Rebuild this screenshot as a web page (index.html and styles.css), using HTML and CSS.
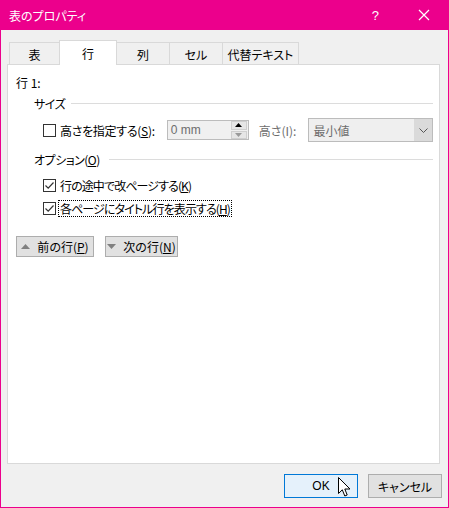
FILE: index.html
```html
<!DOCTYPE html>
<html lang="ja">
<head>
<meta charset="utf-8">
<title>表のプロパティ</title>
<link rel="stylesheet" href="styles.css">
</head>
<body>
<div class="window">
  <div class="titlebar">
    <span class="title">表のプロパティ</span>
    <span class="tb-help">?</span>
    <svg class="tb-close" width="12" height="12" viewBox="0 0 12 12"><path d="M1 1 L11 11 M11 1 L1 11" stroke="#fff" stroke-width="1.2" fill="none"/></svg>
  </div>
  <div class="tabs">
    <div class="tab t1">表</div>
    <div class="tab active">行</div>
    <div class="tab t3">列</div>
    <div class="tab t4">セル</div>
    <div class="tab t5">代替テキスト</div>
  </div>
  <div class="panel">
    <div class="row-label">行 1:</div>
    <div class="group">
      <span class="gt">サイズ</span><span class="rule"></span>
    </div>
    <div class="size-row">
      <span class="cb"></span>
      <span class="lbl">高さを指定する(<u>S</u>):</span>
      <div class="spin">
        <span class="spin-val">0 mm</span>
        <div class="spin-btns">
          <span class="sb up"><svg width="7" height="4" viewBox="0 0 7 4"><path d="M0 4 L3.5 0 L7 4Z" fill="#000"/></svg></span>
          <span class="sb down"><svg width="7" height="4" viewBox="0 0 7 4"><path d="M0 0 L3.5 4 L7 0Z" fill="#9a9a9a"/></svg></span>
        </div>
      </div>
      <span class="lbl dis">高さ(I):</span>
      <div class="combo">
        <span class="combo-val">最小値</span>
        <span class="combo-btn"><svg width="9" height="5" viewBox="0 0 9 5"><path d="M0.5 0.5 L4.5 4.5 L8.5 0.5" stroke="#555" stroke-width="1" fill="none"/></svg></span>
      </div>
    </div>
    <div class="group g2">
      <span class="gt">オプション(<u>O</u>)</span><span class="rule"></span>
    </div>
    <div class="check-row c1">
      <span class="cb"><svg width="11" height="11" viewBox="0 0 11 11"><path d="M1.5 5.5 L4.2 8.2 L9.5 2.5" stroke="#333" stroke-width="1.2" fill="none"/></svg></span>
      <span class="lbl">行の途中で改ページする(<u>K</u>)</span>
    </div>
    <div class="check-row c2">
      <span class="cb"><svg width="11" height="11" viewBox="0 0 11 11"><path d="M1.5 5.5 L4.2 8.2 L9.5 2.5" stroke="#333" stroke-width="1.2" fill="none"/></svg></span>
      <span class="lbl focus">各ページにタイトル行を表示する(<u>H</u>)</span>
    </div>
    <div class="nav-row">
      <button class="btn nav prev"><svg width="9" height="5" viewBox="0 0 9 5"><path d="M0 5 L4.5 0 L9 5Z" fill="#808080"/></svg><span>前の行(<u>P</u>)</span></button>
      <button class="btn nav next"><svg width="9" height="5" viewBox="0 0 9 5"><path d="M0 0 L4.5 5 L9 0Z" fill="#808080"/></svg><span>次の行(<u>N</u>)</span></button>
    </div>
  </div>
  <div class="footer">
    <button class="btn ok">OK</button>
    <button class="btn cancel">キャンセル</button>
  </div>
  <svg class="cursor" width="13" height="21" viewBox="0 0 13 21"><path d="M0.5 0.5 L0.5 16.5 L4.3 12.8 L6.8 19 L9.2 18 L6.8 12 L12 12 Z" fill="#fff" stroke="#000" stroke-width="1" stroke-linejoin="miter"/></svg>
</div>
</body>
</html>
```

FILE: styles.css
```css
* { box-sizing: border-box; }
html, body { margin: 0; padding: 0; }
body {
  width: 449px;
  height: 508px;
  overflow: hidden;
  font-family: "Noto Sans CJK JP", "Noto Sans", sans-serif;
  font-size: 12px;
  font-feature-settings: "palt";
  color: #000;
}
u { text-decoration: underline; text-underline-offset: 1px; }
.window {
  position: relative;
  width: 449px;
  height: 508px;
  background: #f0f0f0;
  border: 1px solid #ec008c;
  border-top: 0;
  display: flex;
  flex-direction: column;
}
.titlebar {
  height: 30px;
  margin: 0 -1px;
  background: #ec008c;
  color: #fff;
  display: flex;
  align-items: center;
  padding-left: 9px;
}
.title { font-size: 12px; flex: 1; }
.tb-help { font-family: "Liberation Sans", sans-serif; font-size: 13px; margin-right: 39px; }
.tb-close { margin-right: 19px; }
.tabs {
  display: flex;
  align-items: flex-end;
  height: 34px;
  padding-left: 8px;
  position: relative;
  z-index: 1;
}
.tab {
  height: 22px;
  border: 1px solid #d9d9d9;
  border-bottom: 0;
  background: #f0f0f0;
  display: flex;
  align-items: center;
  justify-content: center;
  margin-left: -1px;
  padding-top: 1px;
  white-space: nowrap;
}
.t1 { width: 51px; margin-left: 0; }
.active { width: 58px; height: 25px; background: #fff; margin-bottom: -1px; position: relative; z-index: 2; padding-top: 0; }
.t3 { width: 54px; }
.t4 { width: 54px; }
.t5 { width: 77px; }
.panel {
  margin-left: 6px;
  width: 433px;
  height: 400px;
  background: #fff;
  border: 1px solid #d9d9d9;
  padding: 0 6px 0 8px;
}
.row-label { height: 16px; line-height: 16px; margin-top: 10px; }
.group {
  height: 16px;
  margin-top: 4px;
  padding-left: 18px;
  display: flex;
  align-items: center;
  gap: 6px;
}
.gt { white-space: nowrap; flex: none; letter-spacing: -0.5px; }
.group .rule { flex: 1; height: 1px; background: #dcdcdc; }
.g2 { margin-top: 9px; }
.g2 .rule { margin-left: 3px; }
.lbl { white-space: nowrap; flex: none; }
.cb {
  width: 13px;
  height: 13px;
  border: 1px solid #333;
  background: #fff;
  display: inline-flex;
  align-items: center;
  justify-content: center;
  flex: none;
}
.size-row {
  height: 24px;
  margin-top: 7px;
  padding-left: 27px;
  display: flex;
  align-items: center;
}
.size-row .lbl { margin-left: 4px; letter-spacing: -0.3px; }
.dis { color: #6d6d6d; }
.spin {
  width: 82px;
  height: 20px;
  flex: none;
  margin-left: 12px;
  border: 1px solid #bcbcbc;
  background: #f0f0f0;
  display: flex;
  align-items: center;
}
.spin-val { flex: 1; padding-left: 3px; color: #6d6d6d; font-family: "Liberation Sans", sans-serif; font-size: 12px; white-space: nowrap; }
.spin-btns { width: 16px; height: 18px; display: flex; flex-direction: column; gap: 1px; margin-right: 1px; }
.sb { flex: 1; display: flex; align-items: center; justify-content: center; background: #e6e6e6; border: 1px solid #cfcfcf; }
.size-row .lbl.dis { margin-left: 10px; letter-spacing: 0; }
.combo {
  width: 125px;
  height: 24px;
  flex: none;
  margin-left: 12px;
  border: 1px solid #bcbcbc;
  background: #efefef;
  display: flex;
  align-items: center;
}
.combo-val { flex: 1; padding-left: 4px; color: #6d6d6d; white-space: nowrap; }
.combo-btn { width: 18px; height: 22px; background: #dadada; display: flex; align-items: center; justify-content: center; }
.check-row {
  display: flex;
  align-items: center;
  padding-left: 27px;
}
.c1 { height: 16px; margin-top: 10px; }
.c2 { height: 17px; margin-top: 7px; }
.check-row .lbl { margin-left: 4px; letter-spacing: -0.9px; }
.check-row .lbl.focus { margin-left: 2px; padding: 0 1px; height: 17px; line-height: 15px; border: 1px dotted #000; }
.nav-row { display: flex; gap: 11px; margin-top: 19px; }
.btn {
  font-family: inherit;
  font-size: 12px;
  font-feature-settings: "palt";
  color: #000;
  background: #e1e1e1;
  border: 1px solid #adadad;
  padding: 0;
  display: flex;
  align-items: center;
  justify-content: center;
  border-radius: 0;
  white-space: nowrap;
}
.nav { height: 21px; gap: 7px; }
.prev { width: 78px; }
.next { width: 73px; }
.footer {
  display: flex;
  justify-content: flex-end;
  gap: 10px;
  padding: 10px 6px 0 0;
}
.ok, .cancel { width: 74px; height: 24px; }
.ok { background: #e5f1fb; border-color: #0078d7; font-family: "Liberation Sans", sans-serif; }
.cursor { position: absolute; left: 337px; top: 477px; }
```
